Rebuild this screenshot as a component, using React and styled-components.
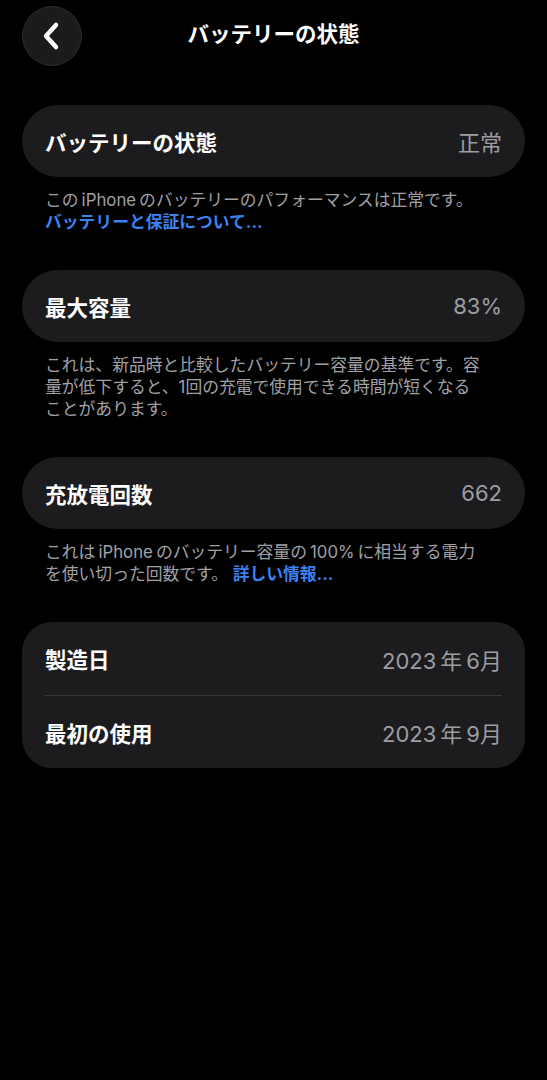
import React from "react";
import styled, { createGlobalStyle } from "styled-components";

const Global = createGlobalStyle`
  html, body { margin: 0; padding: 0; background: #000; }
  body { font-family: "Inter", "Noto Sans CJK JP", sans-serif; -webkit-font-smoothing: antialiased; }
`;

const Page = styled.div`
  min-height: 1080px;
  background: #000;
  padding: 6px 22px 0;
  box-sizing: border-box;
  color: #fff;
`;

const Header = styled.header`
  display: grid;
  grid-template-columns: 60px 1fr 60px;
  align-items: center;
  height: 60px;
  margin-bottom: 39px;
`;

const BackButton = styled.button`
  width: 60px;
  height: 60px;
  border-radius: 50%;
  background: #1b1b1c;
  border: 1px solid #2c2c2e;
  box-sizing: border-box;
  display: flex;
  align-items: center;
  justify-content: center;
  padding: 0;
  cursor: pointer;
`;

const Title = styled.h1`
  margin: 0 0 2px;
  text-align: center;
  font-size: 21.5px;
  font-weight: 700;
  color: #fff;
  line-height: 1;
`;

const Card = styled.div`
  background: #1c1c1e;
  border-radius: ${(p) => p.$radius || 36}px;
  padding: 0 23px;
`;

const Row = styled.div`
  display: flex;
  align-items: center;
  justify-content: space-between;
  height: ${(p) => p.$h || 72}px;
  box-sizing: border-box;
  & + & {
    border-top: 1px solid #38383a;
  }
`;

const Label = styled.span`
  font-size: 21.5px;
  font-weight: 700;
  color: #fff;
`;

const Value = styled.span`
  font-size: 22px;
  font-weight: 400;
  color: #9d9da3;
`;

const Footnote = styled.p`
  margin: 12px 0 37px;
  padding: 0 41px 0 23px;
  font-size: 16.8px;
  line-height: 22px;
  color: #a0a0a6;
`;

const Link = styled.a`
  color: #3b82f0;
  font-weight: 700;
  text-decoration: none;
`;

const Chevron = () => (
  <svg width="22" height="30" viewBox="0 0 22 30">
    <path
      d="M15 4 L5 15 L15 26"
      fill="none"
      stroke="#fff"
      strokeWidth="4.5"
      strokeLinecap="round"
      strokeLinejoin="round"
    />
  </svg>
);

const T = "\u2009";

export default function App() {
  return (
    <>
      <Global />
      <Page>
        <Header>
          <BackButton aria-label="戻る">
            <Chevron />
          </BackButton>
          <Title>バッテリーの状態</Title>
          <span />
        </Header>

        <Card>
          <Row>
            <Label>バッテリーの状態</Label>
            <Value>正常</Value>
          </Row>
        </Card>
        <Footnote>
          {`この${T}iPhone${T}のバッテリーのパフォーマンスは正常です。`}
          <br />
          <Link href="#">バッテリーと保証について...</Link>
        </Footnote>

        <Card>
          <Row>
            <Label>最大容量</Label>
            <Value>83%</Value>
          </Row>
        </Card>
        <Footnote>
          これは、新品時と比較したバッテリー容量の基準です。容量が低下すると、1回の充電で使用できる時間が短くなることがあります。
        </Footnote>

        <Card>
          <Row>
            <Label>充放電回数</Label>
            <Value>662</Value>
          </Row>
        </Card>
        <Footnote>
          {`これは${T}iPhone${T}のバッテリー容量の${T}100%${T}に相当する電力を使い切った回数です。 `}
          <Link href="#">詳しい情報...</Link>
        </Footnote>

        <Card $radius={30}>
          <Row $h={73}>
            <Label>製造日</Label>
            <Value>{`2023${T}年${T}6月`}</Value>
          </Row>
          <Row $h={73}>
            <Label>最初の使用</Label>
            <Value>{`2023${T}年${T}9月`}</Value>
          </Row>
        </Card>
      </Page>
    </>
  );
}
